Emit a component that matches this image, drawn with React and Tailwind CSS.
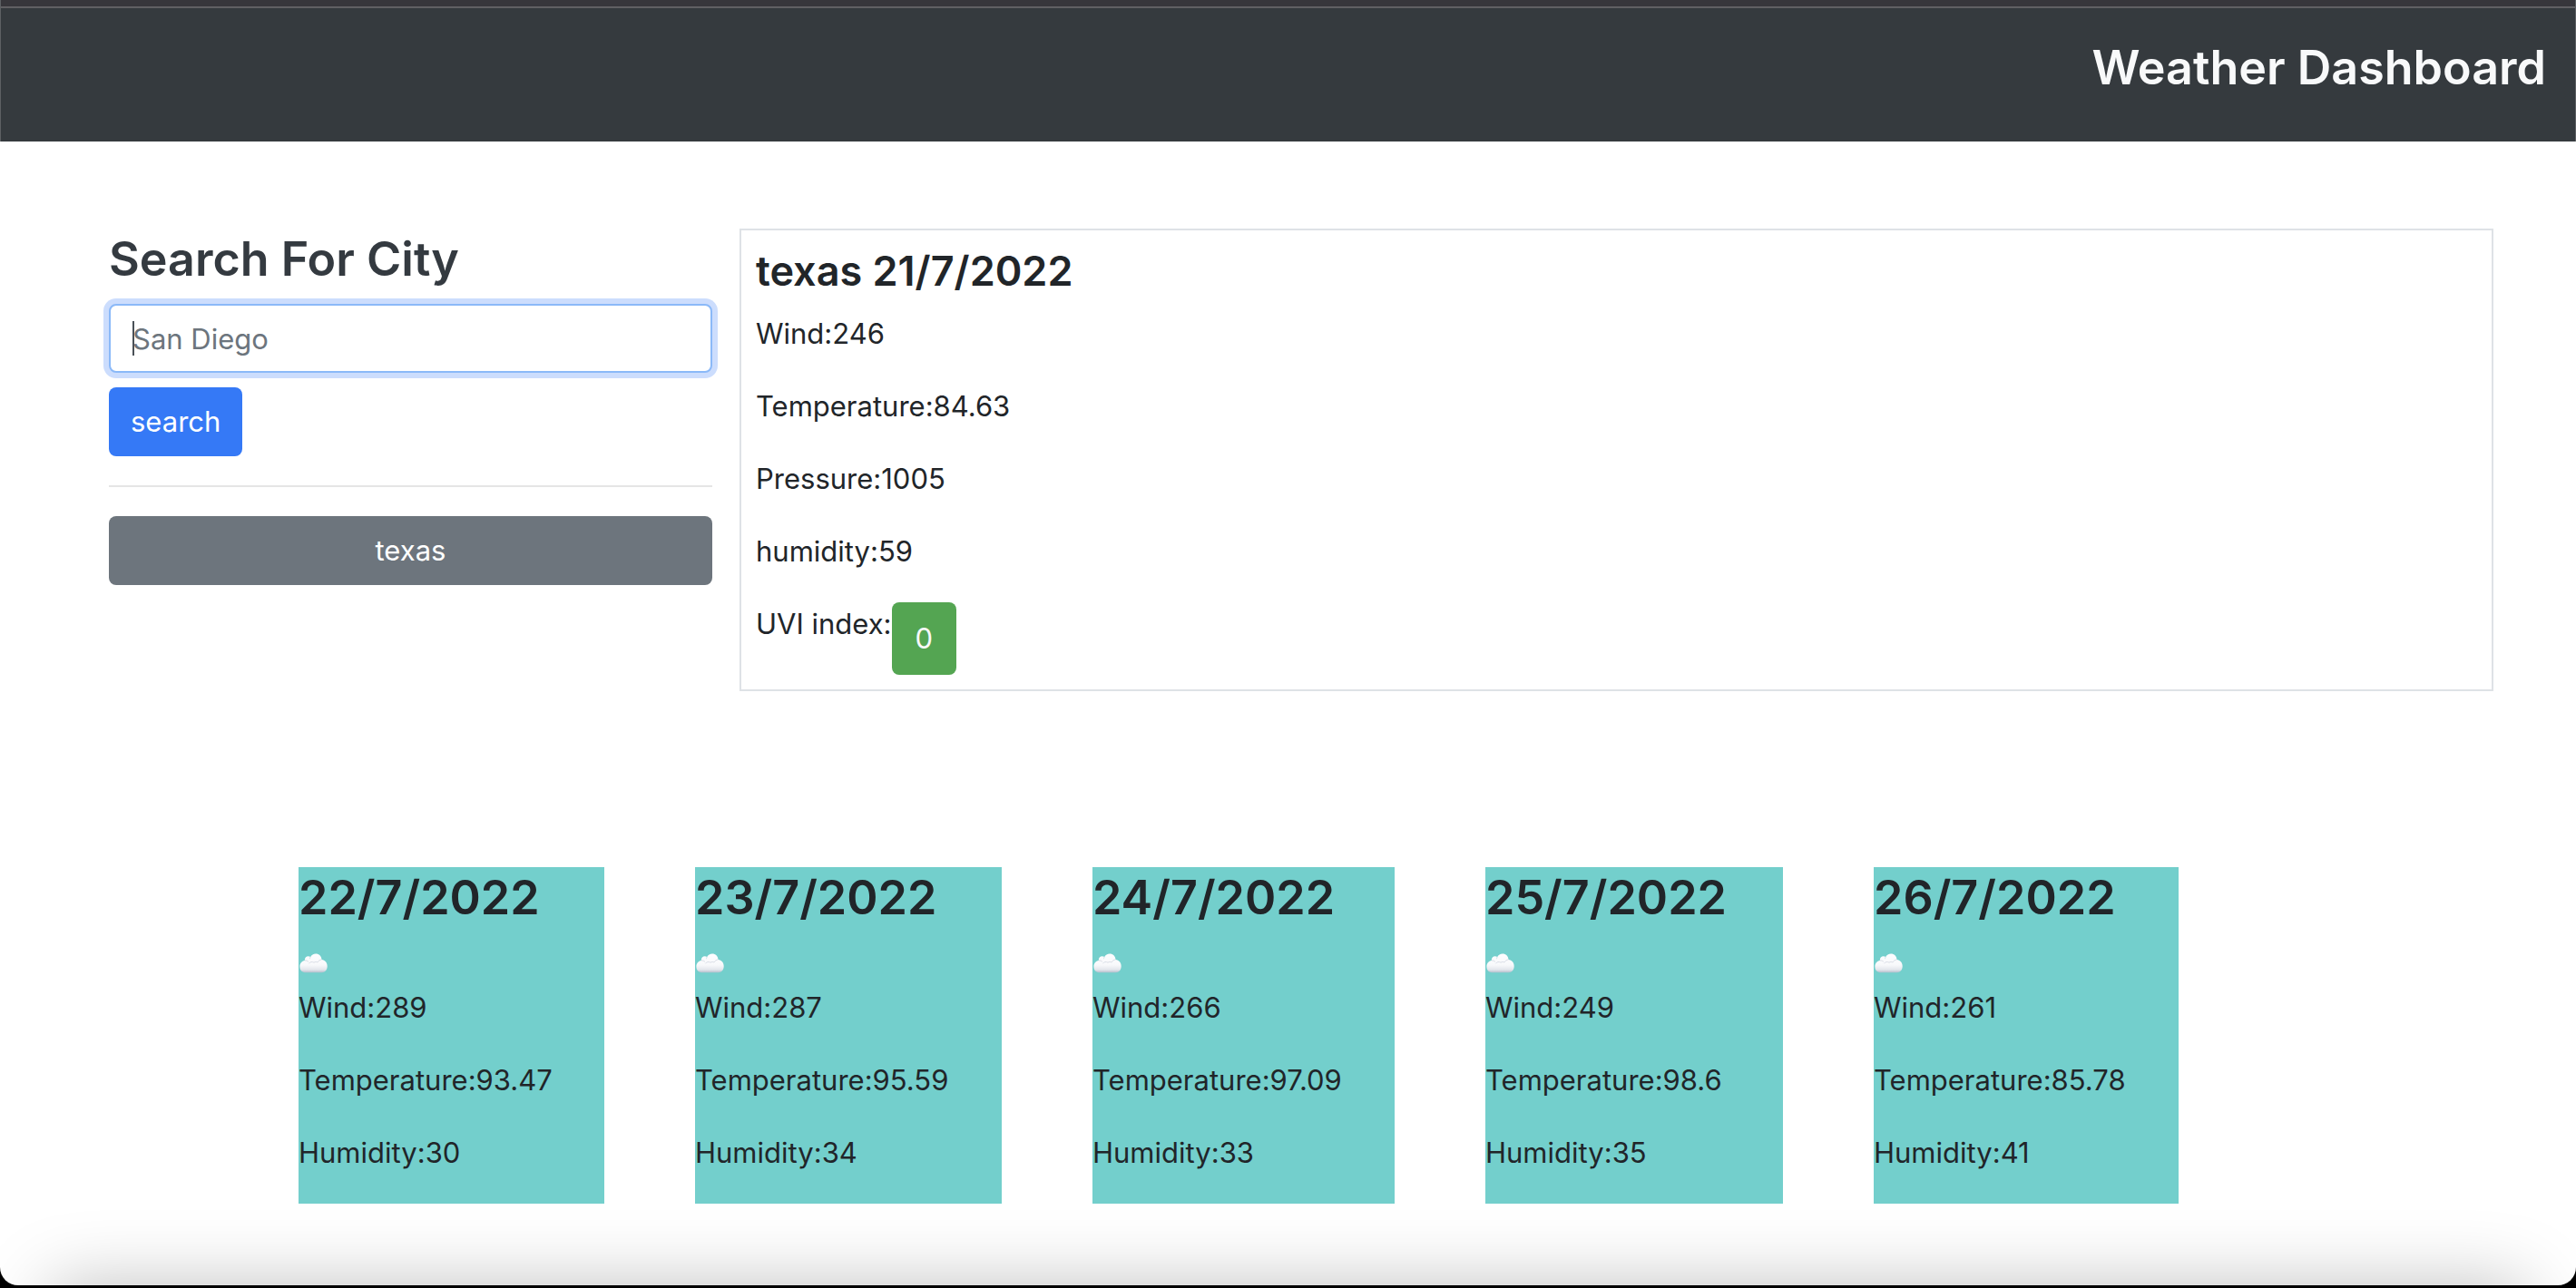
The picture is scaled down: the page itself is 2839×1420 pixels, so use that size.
const current = {
  title: 'texas 21/7/2022',
  lines: ['Wind:246', 'Temperature:84.63', 'Pressure:1005', 'humidity:59'],
};

const forecast = [
  { date: '22/7/2022', wind: '289', temperature: '93.47', humidity: '30' },
  { date: '23/7/2022', wind: '287', temperature: '95.59', humidity: '34' },
  { date: '24/7/2022', wind: '266', temperature: '97.09', humidity: '33' },
  { date: '25/7/2022', wind: '249', temperature: '98.6', humidity: '35' },
  { date: '26/7/2022', wind: '261', temperature: '85.78', humidity: '41' },
];

function Cloud() {
  return (
    <svg className="mt-[12px] ml-[1px] block h-[22px] w-[32px]" viewBox="0 0 32 22" role="img" aria-label="Cloudy">
      <defs>
        <linearGradient id="cloud-body" x1="0" y1="0" x2="0" y2="1">
          <stop offset="0" stopColor="#fdfdff" />
          <stop offset="0.6" stopColor="#f8f9fb" />
          <stop offset="0.85" stopColor="#e3e6ec" />
          <stop offset="1" stopColor="#b4bfcd" />
        </linearGradient>
      </defs>
      <path
        d="M6.200 21.200C2.700 21.200 .4 18.400 .4 14.600C.4 11 2.500 8.400 5.800 7.900C5.600 5.200 7.400 3.300 9.800 3.300C10.700 3.300 11.500 3.500 12.200 4C13.300 1.800 15.500 .5 18 .5C21.600 .5 24.300 3.100 24.500 6.900C28.200 7.200 30.700 10.200 30.700 14.200C30.700 18.300 28.200 21.200 24.500 21.200Z"
        fill="url(#cloud-body)"
      />
      <path
        d="M5.800 7.900C7.600 7.700 9 8.300 10 9.500M12.200 4C11.700 4.800 11.500 5.500 11.500 6.200M10.500 11.300C11.500 9.400 14 8.900 16 10.200C17.500 9.200 19 9.300 20 10M20 10C21 8.200 22.500 7.200 24.500 6.900"
        fill="none"
        stroke="#d6dae3"
        strokeWidth="0.9"
      />
    </svg>
  );
}

function DayCard({ day }) {
  return (
    <article className="bg-[#73cfcc]">
      <h2 className="mb-[16px] text-[52px] leading-[67px] font-semibold">{day.date}</h2>
      <div className="h-[48px] overflow-hidden">
        <Cloud />
      </div>
      <p className="mb-[32px]">Wind:{day.wind}</p>
      <p className="mb-[32px]">Temperature:{day.temperature}</p>
      <p className="pb-[32px]">Humidity:{day.humidity}</p>
    </article>
  );
}

export default function App() {
  return (
    <div className="min-h-screen bg-black font-['Inter',sans-serif] text-[31px] leading-[48px] text-[#212529]">
      <div className="relative min-h-[calc(100vh-3px)] overflow-hidden rounded-b-[20px] bg-white">
        <header className="border-x border-[#5d6063] bg-[#353a3e]">
          <div className="h-[9px] border-b-2 border-[#606063] bg-[#37363b]" />
          <div className="px-[32px] pt-[32px] pb-[48px]">
            <h1 className="text-right text-[52px] leading-[67px] font-semibold text-[#f8f9fa]">Weather Dashboard</h1>
          </div>
        </header>

        <main>
          <div className="grid grid-cols-[665fr_1933fr] items-start gap-[30px] pt-[96px] pr-[91px] pl-[120px]">
            <section>
              <form onSubmit={(e) => e.preventDefault()}>
                <label htmlFor="city" className="mb-[16px] block text-[52px] leading-[67px] font-semibold text-[#343a40]">
                  Search For City
                </label>
                <div className="relative mb-[16px]">
                  <input
                    id="city"
                    type="text"
                    placeholder="San Diego"
                    className="block h-[76px] w-full rounded-[8px] border-2 border-[#8bb9f8] bg-white px-[24px] text-[31px] leading-[48px] shadow-[0_0_0_6px_#ccddfd] outline-none placeholder:text-[#6c757d]"
                  />
                  <span className="absolute top-[19px] left-[26px] h-[38px] w-[2px] bg-[#495057]" aria-hidden="true" />
                </div>
                <button type="submit" className="block h-[76px] rounded-[8px] bg-[#3579f6] px-[24px] text-white">
                  search
                </button>
              </form>
              <hr className="my-[32px] border-t-2 border-[#e5e5e5]" />
              <button type="button" className="block h-[76px] w-full rounded-[8px] bg-[#6d757d] text-white">
                texas
              </button>
            </section>

            <section className="border-2 border-[#dee2e6] p-[16px]">
              <h3 className="mb-[16px] text-[45px] leading-[58px] font-semibold">{current.title}</h3>
              {current.lines.map((line) => (
                <p key={line} className="mb-[32px]">{line}</p>
              ))}
              <div className="flex items-start">
                <p>UVI index:</p>
                <span className="rounded-[8px] bg-[#54a552] px-[26px] py-[16px] text-[#f8f9fa]">0</span>
              </div>
            </section>
          </div>

          <section className="grid grid-cols-[337fr_338fr_333fr_328fr_336fr] gap-[100px] pt-[194px] pr-[438px] pb-[80px] pl-[329px]">
            {forecast.map((day) => (
              <DayCard key={day.date} day={day} />
            ))}
          </section>
        </main>
        <div className="absolute top-full right-[56px] left-[56px] h-[160px] shadow-[0_0_80px_rgba(0,0,0,0.25)]" aria-hidden="true" />
      </div>
    </div>
  );
}
